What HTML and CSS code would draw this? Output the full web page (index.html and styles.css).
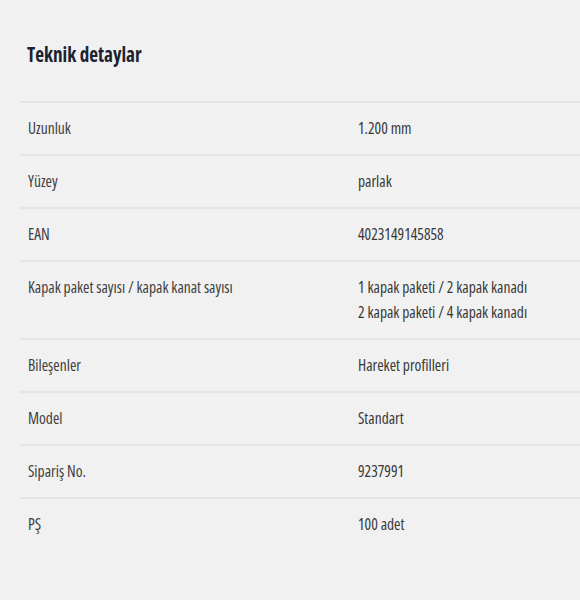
FILE: index.html
```html
<!DOCTYPE html>
<html lang="tr">
<head>
<meta charset="utf-8">
<link rel="stylesheet" href="styles.css">
</head>
<body>
<section class="panel">
  <h2 class="title">Teknik detaylar</h2>
  <div class="specs">
    <div class="row"><div class="label">Uzunluk</div><div class="value">1.200 mm</div></div>
    <div class="row"><div class="label">Yüzey</div><div class="value">parlak</div></div>
    <div class="row"><div class="label">EAN</div><div class="value">4023149145858</div></div>
    <div class="row"><div class="label">Kapak paket sayısı / kapak kanat sayısı</div><div class="value">1 kapak paketi / 2 kapak kanadı<br>2 kapak paketi / 4 kapak kanadı</div></div>
    <div class="row"><div class="label">Bileşenler</div><div class="value">Hareket profilleri</div></div>
    <div class="row"><div class="label">Model</div><div class="value">Standart</div></div>
    <div class="row"><div class="label">Sipariş No.</div><div class="value">9237991</div></div>
    <div class="row"><div class="label">PŞ</div><div class="value">100 adet</div></div>
  </div>
</section>
</body>
</html>
```
FILE: styles.css
```css
html, body {
  margin: 0;
  padding: 0;
  background: #f1f1f1;
}
body {
  font-family: "Open Sans", "Liberation Sans", sans-serif;
  font-stretch: 75%;
  color: #333;
  width: 580px;
  height: 600px;
  overflow: hidden;
}
.panel {
  padding: 39px 0 0 20px;
}
.title {
  margin: 0 0 34px 0;
  padding-left: 8px;
  font-size: 22px;
  line-height: 28px;
  font-weight: 700;
  color: #1c2330;
  transform: scaleX(0.87);
  transform-origin: left center;
}
.specs {
  width: 580px;
}
.row {
  display: grid;
  grid-template-columns: 330px 1fr;
  border-top: 2px solid #e4e4e4;
  padding: 13px 0 13px 8px;
  font-size: 15.5px;
  font-weight: 400;
  line-height: 25px;
}
.label {
  color: #404040;
}
.value {
  color: #383838;
}
```
